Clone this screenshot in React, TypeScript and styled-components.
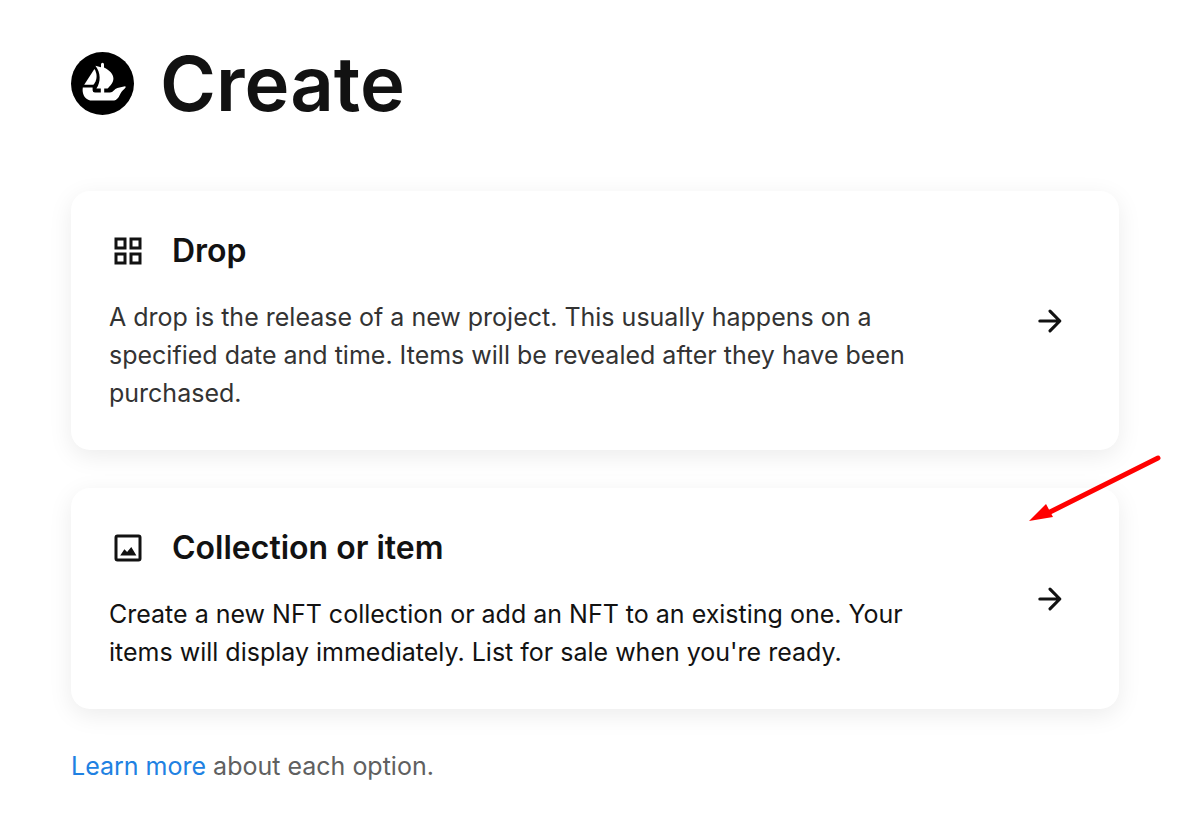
import React from "react";
import styled, { createGlobalStyle } from "styled-components";
import { MdOutlineGridView } from "react-icons/md";

const GlobalStyle = createGlobalStyle`
  * { box-sizing: border-box; }
  body {
    margin: 0;
    background: #ffffff;
    color: #121212;
    font-family: Inter, "Liberation Sans", sans-serif;
    font-size: 25px;
    line-height: 38px;
  }
`;

const Page = styled.main`
  padding: 37px 81px 38px 71px;
`;

const Header = styled.header`
  display: flex;
  align-items: center;
  gap: 26px;
  margin-bottom: 62px;
`;

const Logo = styled.svg`
  width: 63px;
  height: 63px;
  flex: none;
`;

const Heading = styled.h1`
  margin: 0;
  font-size: 76px;
  font-weight: 600;
  line-height: 92px;
`;

const Options = styled.div`
  display: flex;
  flex-direction: column;
  gap: 38px;
`;

const OptionSlot = styled.div`
  position: relative;
`;

const OptionCard = styled.a`
  display: flex;
  align-items: center;
  justify-content: space-between;
  padding: 38px 50px 38px 38px;
  border-radius: 19px;
  background: #ffffff;
  box-shadow: 0 6px 25px rgba(0, 0, 0, 0.08);
  color: inherit;
  text-decoration: none;
`;

const OptionBody = styled.div`
  flex: 0 1 840px;
`;

const OptionTitle = styled.h2`
  display: flex;
  align-items: center;
  gap: 25px;
  margin: 0 0 25px;
  font-size: 32px;
  font-weight: 600;
  line-height: 44px;

  svg {
    width: 38px;
    height: 38px;
    padding: 1px;
    flex: none;
  }
`;

const Description = styled.p<{ $soft?: boolean }>`
  margin: 0;
  color: ${(p) => (p.$soft ? "#333333" : "#121212")};
`;

const Forward = styled.svg`
  width: 38px;
  height: 38px;
  flex: none;
`;

const Pointer = styled.svg`
  position: absolute;
  top: -36px;
  right: -45px;
  width: 136px;
  height: 72px;
  pointer-events: none;
`;

const Footnote = styled.p`
  margin: 38px 0 0;
  color: #606060;
`;

const FootnoteLink = styled.a`
  color: #2081e2;
  text-decoration: none;
`;

const ShipLogo = () => (
  <Logo viewBox="0 0 63 63" aria-hidden="true">
    <circle cx="31.5" cy="31.5" r="31.5" fill="#000000" />
    <g fill="#ffffff">
      <path d="M23.4 17C25.6 20.4 26.4 25 24.6 29.2Q23.6 31.4 22.4 32.8H13.2Z" />
      <path d="M24.4 13.8 30 15.2V12.4Q30 10.8 31.5 10.8T33 12.4V15.4C38.4 18 42.4 22 42.4 26.4C42.4 30.6 39.4 33.4 36.6 36.5H33.2V41H29.8V36.5H25.4C30 30 29.8 20.6 24.4 13.8Z" />
      <path d="M11.8 35.4H21.6V38.2Q21.6 40.4 24 40.4H39Q41.2 40.4 42.8 38.4Q44.2 36.6 46.4 36L54 34.2Q54.8 34.2 54.6 35.6C52.8 38 51 38.6 49.8 41C48 44.4 46.8 48.6 41.4 48.6H21.4C15.2 48.6 11.6 43.8 11.6 38Z" />
    </g>
  </Logo>
);

const PictureIcon = () => (
  <svg viewBox="0 0 24 24" fill="currentColor" aria-hidden="true">
    <path
      fillRule="evenodd"
      d="M5 3h14a2 2 0 0 1 2 2v14a2 2 0 0 1-2 2H5a2 2 0 0 1-2-2V5a2 2 0 0 1 2-2Zm0 2v14h14V5H5Z"
    />
    <path d="M6.8 17 9.6 12.8 11.4 14.6 14.2 11.3 17.6 17Z" />
  </svg>
);

const ForwardArrow = () => (
  <Forward
    viewBox="0 0 24 24"
    fill="none"
    stroke="currentColor"
    strokeWidth="2"
    strokeLinecap="round"
    strokeLinejoin="round"
    aria-hidden="true"
  >
    <path d="M5.6 12H18M12 5.8 18.2 12 12 18.2" />
  </Forward>
);

interface OptionProps {
  icon: React.ReactNode;
  title: string;
  text: string;
  soft?: boolean;
  children?: React.ReactNode;
}

const Option = ({ icon, title, text, soft, children }: OptionProps) => (
  <OptionSlot>
    <OptionCard href="#">
      <OptionBody>
        <OptionTitle>
          {icon}
          {title}
        </OptionTitle>
        <Description $soft={soft}>{text}</Description>
      </OptionBody>
      <ForwardArrow />
    </OptionCard>
    {children}
  </OptionSlot>
);

export default function App() {
  return (
    <>
      <GlobalStyle />
      <Page>
        <Header>
          <ShipLogo />
          <Heading>Create</Heading>
        </Header>
        <Options>
          <Option
            icon={<MdOutlineGridView aria-hidden="true" />}
            title="Drop"
            text="A drop is the release of a new project. This usually happens on a specified date and time. Items will be revealed after they have been purchased."
            soft
          />
          <Option
            icon={<PictureIcon />}
            title="Collection or item"
            text="Create a new NFT collection or add an NFT to an existing one. Your items will display immediately. List for sale when you're ready."
          >
            <Pointer viewBox="0 0 136 72" aria-hidden="true">
              <path d="M130 6 20 61" stroke="#ff0000" strokeWidth="5" strokeLinecap="round" />
              <path d="M1 69 18 52 25 65Z" fill="#ff0000" />
            </Pointer>
          </Option>
        </Options>
        <Footnote>
          <FootnoteLink href="#">Learn more</FootnoteLink> about each option.
        </Footnote>
      </Page>
    </>
  );
}
